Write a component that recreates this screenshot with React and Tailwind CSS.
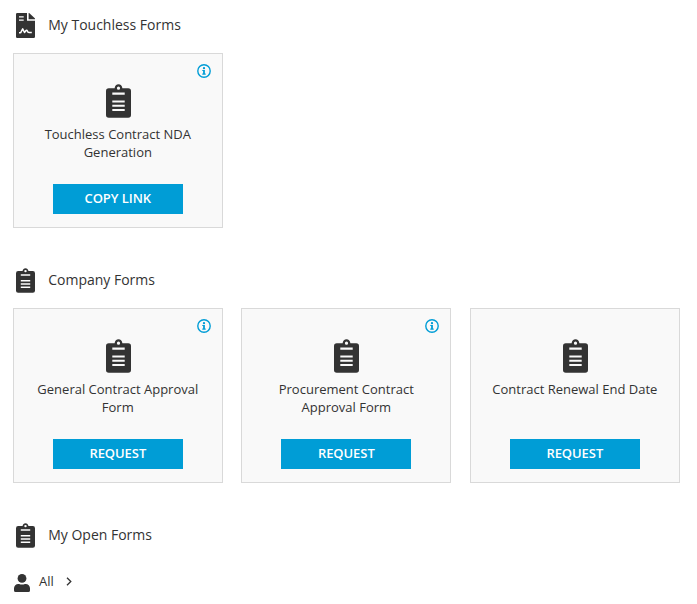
import React from "react";

const touchlessForms = [
  { title: "Touchless Contract NDA Generation", action: "COPY LINK", info: true },
];

const companyForms = [
  { title: "General Contract Approval Form", action: "REQUEST", info: true },
  { title: "Procurement Contract Approval Form", action: "REQUEST", info: true },
  { title: "Contract Renewal End Date", action: "REQUEST", info: false },
];

function ClipboardIcon({ className }) {
  return (
    <svg viewBox="0 0 25 34" preserveAspectRatio="none" className={className}>
      <path
        fill="currentColor"
        fillRule="evenodd"
        d="M2.8 4.2H8.6C9 1.8 10.4.3 12.5.3s3.5 1.5 3.9 3.9h5.8A2.8 2.8 0 0 1 25 7v24a2.8 2.8 0 0 1-2.8 2.8H2.8A2.8 2.8 0 0 1 0 31V7a2.8 2.8 0 0 1 2.8-2.8ZM12.5 2.6a1.6 1.6 0 1 0 0 3.2 1.6 1.6 0 0 0 0-3.2ZM6.3 8.6v2.1h12.4V8.6ZM6.3 16.4v2.1h12.4v-2.1ZM6.3 20.7v2.1h12.4v-2.1ZM6.3 25v2.1h12.4V25Z"
      />
    </svg>
  );
}

function SignedFileIcon({ className }) {
  return (
    <svg viewBox="0 0 19 25" className={className}>
      <path
        fill="currentColor"
        fillRule="evenodd"
        d="M1.3 0H11v7.7h8v16a1.3 1.3 0 0 1-1.3 1.3H1.3A1.3 1.3 0 0 1 0 23.7V1.3A1.3 1.3 0 0 1 1.3 0ZM3 3.2v1.3h4.7V3.2ZM3 6.4v1.3h4.7V6.4Z"
      />
      <path fill="currentColor" d="M12.6 0h.6L19 5.6v.7h-6.4Z" />
      <path
        d="M3 19.7h1.2c.6 0 .8-.3 1-1L6.7 15.8l1.8 3.7 1.5-2c.5-.6.9-.4 1.2.2l.6 1.1c.3.6.8.7 1.5.7h2.5"
        fill="none"
        stroke="#fff"
        strokeWidth="1.5"
        strokeLinejoin="round"
      />
    </svg>
  );
}

function InfoIcon({ className }) {
  return (
    <svg viewBox="0 0 14 14" className={className}>
      <circle cx="7" cy="7" r="6.2" fill="none" stroke="currentColor" strokeWidth="1.4" />
      <circle cx="7" cy="4.2" r="1.15" fill="currentColor" />
      <path d="M5.3 6h2.6v3.6h.8v1.1H5.3V9.6h.8V7.1h-.8Z" fill="currentColor" />
    </svg>
  );
}

function UserIcon({ className }) {
  return (
    <svg viewBox="0 0 16 18" className={className}>
      <circle cx="8" cy="4.4" r="4.4" fill="currentColor" />
      <path
        d="M4.3 10h.8c1.8.8 4 .8 5.8 0h.8A4.3 4.3 0 0 1 16 14.3v2.1a1.6 1.6 0 0 1-1.6 1.6H1.6A1.6 1.6 0 0 1 0 16.4v-2.1A4.3 4.3 0 0 1 4.3 10Z"
        fill="currentColor"
      />
    </svg>
  );
}

function SectionTitle({ icon, children }) {
  return (
    <div className="flex h-[26px] items-center gap-[13px] pl-[3.4px]">
      {icon}
      <h2 className="text-[14px] leading-[20px]">{children}</h2>
    </div>
  );
}

function FormCard({ form }) {
  return (
    <div className="relative flex h-[175px] w-[210px] shrink-0 flex-col items-center border border-[#d9d9d9] bg-[#f9f9f9] pt-[30px]">
      {form.info && (
        <InfoIcon className="absolute top-[10px] right-[11px] h-[14px] w-[14px] text-[#009dd6]" />
      )}
      <ClipboardIcon className="ml-[1px] h-[34px] w-[25px] shrink-0" />
      <p className="mt-[7px] h-[36px] w-[180px] text-center text-[13px] leading-[18px]">
        {form.title}
      </p>
      <button className="mt-[23px] h-[30px] w-[130px] shrink-0 bg-[#009dd6] pb-[2px] text-[13px] leading-[28px] font-semibold tracking-[-0.05px] text-white">
        {form.action}
      </button>
    </div>
  );
}

function FormList({ forms }) {
  return (
    <div className="mt-[15px] flex gap-[18.5px]">
      {forms.map((form) => (
        <FormCard key={form.title} form={form} />
      ))}
    </div>
  );
}

function App() {
  return (
    <div className="h-[604px] w-[697px] overflow-hidden bg-white pt-[12px] pl-[12.8px] font-['Open_Sans',sans-serif] text-[#333333]">
      <section className="h-[255px]">
        <SectionTitle icon={<SignedFileIcon className="h-[25px] w-[19px]" />}>
          My Touchless Forms
        </SectionTitle>
        <FormList forms={touchlessForms} />
      </section>
      <section className="h-[255px]">
        <SectionTitle icon={<ClipboardIcon className="h-[25px] w-[19px]" />}>
          Company Forms
        </SectionTitle>
        <FormList forms={companyForms} />
      </section>
      <section>
        <SectionTitle icon={<ClipboardIcon className="h-[25px] w-[19px]" />}>
          My Open Forms
        </SectionTitle>
        <div className="mt-[23px] flex h-[20px] items-center pl-[1.2px]">
          <UserIcon className="mt-[4px] h-[18px] w-[16px]" />
          <span className="ml-[9px] text-[13px] leading-[18px]">All</span>
          <svg viewBox="0 0 6 9" className="ml-[12px] h-[9px] w-[6px]">
            <path d="M1 .7 4.8 4.5 1 8.3" fill="none" stroke="currentColor" strokeWidth="1.3" />
          </svg>
        </div>
      </section>
    </div>
  );
}

export default App;
